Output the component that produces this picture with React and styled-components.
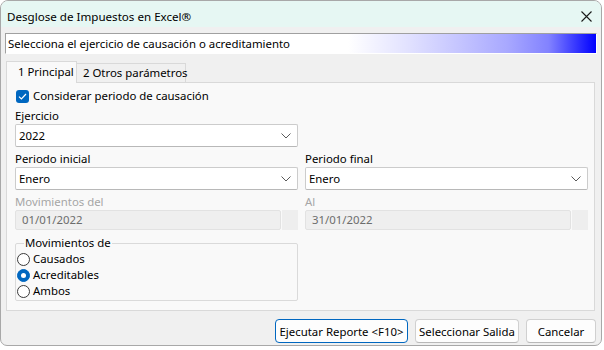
import React from 'react';
import styled, { createGlobalStyle } from 'styled-components';

const Global = createGlobalStyle`
  html, body { margin: 0; padding: 0; background: #ffffff; }
  body {
    font-family: "Segoe UI", "Noto Sans", "Open Sans", sans-serif;
    font-size: 11.4px;
    color: #000;
  }
  * { box-sizing: border-box; }
`;

const Window = styled.div`
  width: 602px;
  height: 346px;
  border: 1px solid #a8a8a8;
  border-radius: 8px 8px 7px 7px;
  background: #f0f0f0;
  overflow: hidden;
  display: flex;
  flex-direction: column;
`;

const TitleBar = styled.div`
  height: 26px;
  flex: none;
  background: #e6f7f3;
  display: flex;
  align-items: center;
  justify-content: space-between;
  padding: 4px 9px 0 6px;
`;

const Title = styled.span`
  font-size: 11.6px;
  line-height: 16px;
  padding-top: 2px;
`;

const Body = styled.div`
  flex: 1;
  display: flex;
  flex-direction: column;
  padding: 6px 4px 0 4px;
`;

const Banner = styled.div`
  height: 21px;
  border-top: 1px solid #a0a0a0;
  border-left: 1px solid #a0a0a0;
  border-bottom: 1px solid #ffffff;
  border-right: 1px solid #ffffff;
  padding-left: 2px;
  line-height: 19px;
  background: linear-gradient(
    to right,
    #ffffff 0%,
    #ffffff 58%,
    #e2e2ff 68%,
    #c4c4ff 77%,
    #a8a8ff 85%,
    #8282ff 92%,
    #3030ff 97%,
    #0000ff 100%
  );
`;

const TabRow = styled.div`
  margin-top: 7px;
  margin-left: 1px;
  height: 21px;
  display: flex;
  align-items: flex-end;
`;

const Tab = styled.div`
  position: relative;
  z-index: ${p => (p.$active ? 2 : 1)};
  width: ${p => p.$w}px;
  height: ${p => (p.$active ? '22px' : '19px')};
  margin-bottom: ${p => (p.$active ? '-1px' : '0')};
  padding: ${p => (p.$active ? '2px 0 0 11px' : '1px 0 0 6px')};
  background: ${p => (p.$active ? '#f9f9f9' : '#f0f0f0')};
  border: 1px solid #d9d9d9;
  border-bottom: none;
  border-left: ${p => (p.$active ? '1px solid #d9d9d9' : 'none')};
  line-height: 16px;
  white-space: nowrap;
`;

const Panel = styled.div`
  margin-left: 1px;
  width: 589px;
  height: 229px;
  border: 1px solid #d9d9d9;
  background: #f9f9f9;
  padding: 5px 6px 0 8px;
  display: flex;
  flex-direction: column;
`;

const CheckRow = styled.label`
  height: 16px;
  display: flex;
  align-items: center;
  gap: 4px;
  line-height: 16px;
`;

const CheckBox = styled.span`
  width: 13px;
  height: 13px;
  border-radius: 3px;
  background: #0067c0;
  display: flex;
  align-items: center;
  justify-content: center;
  margin-left: 1px;
`;

const Grid = styled.div`
  display: grid;
  grid-template-columns: 283px 283px;
  column-gap: 7px;
  margin-top: 4px;
`;

const Field = styled.div`
  display: flex;
  flex-direction: column;
`;

const Label = styled.div`
  height: 16px;
  line-height: 16px;
  color: ${p => (p.$disabled ? '#a6a6a6' : '#000')};
`;

const Select = styled.div`
  height: 23px;
  background: #ffffff;
  border: 1px solid #cccccc;
  border-bottom-color: #b8b8b8;
  border-radius: 2px;
  display: flex;
  align-items: center;
  justify-content: space-between;
  padding: 0 6px 0 3px;
  line-height: 16px;
`;

const DisabledRow = styled.div`
  display: flex;
  gap: 1px;
  height: 20px;
`;

const DisabledInput = styled.div`
  flex: 1;
  height: 20px;
  background: #efefef;
  border: 1px solid #e2e2e2;
  border-radius: 2px;
  color: #6d6d6d;
  line-height: 18px;
  padding-left: 6px;
`;

const SpinBox = styled.div`
  width: 16px;
  height: 20px;
  background: #eeeeee;
`;

const Group = styled.fieldset`
  margin: 5px 0 0 0;
  width: 283px;
  border: 1px solid #dadada;
  border-radius: 2px;
  padding: 0 0 1px 1px;
`;

const Legend = styled.legend`
  margin-left: 7px;
  padding: 0 1px;
  line-height: 16px;
`;

const RadioRow = styled.label`
  height: 16px;
  display: flex;
  align-items: center;
  gap: 3px;
  line-height: 16px;
`;

const RadioCircle = styled.span`
  width: 13px;
  height: 13px;
  border-radius: 50%;
  border: 1px solid ${p => (p.$checked ? '#0067c0' : '#3a3a3a')};
  background: ${p => (p.$checked ? '#0067c0' : '#ffffff')};
  display: flex;
  align-items: center;
  justify-content: center;
  &::after {
    content: '';
    display: ${p => (p.$checked ? 'block' : 'none')};
    width: 5px;
    height: 5px;
    border-radius: 50%;
    background: #ffffff;
  }
`;

const Footer = styled.div`
  margin-top: 8px;
  display: flex;
  justify-content: flex-end;
  gap: 7px;
  padding-right: 1px;
`;

const Button = styled.button`
  width: ${p => p.$w}px;
  height: 24px;
  font-family: inherit;
  font-size: 11.4px;
  color: #000;
  background: #fdfdfd;
  border: 1px solid ${p => (p.$default ? '#0067c0' : '#d0d0d0')};
  border-bottom-color: ${p => (p.$default ? '#0067c0' : '#b8b8b8')};
  border-radius: 4px;
  padding: 0;
  white-space: nowrap;
`;

const Chevron = () => (
  <svg width="10" height="6" viewBox="0 0 10 6">
    <path d="M0.5 0.5 L5 5 L9.5 0.5" fill="none" stroke="#5a5a5a" strokeWidth="1" />
  </svg>
);

const CloseIcon = () => (
  <svg width="11" height="11" viewBox="0 0 11 11">
    <path d="M0.5 0.5 L10.5 10.5 M10.5 0.5 L0.5 10.5" stroke="#1a1a1a" strokeWidth="1.1" />
  </svg>
);

const CheckMark = () => (
  <svg width="9" height="7" viewBox="0 0 9 7">
    <path d="M1 3.6 L3.4 6 L8 1" fill="none" stroke="#ffffff" strokeWidth="1.2" />
  </svg>
);

export default function App() {
  return (
    <>
      <Global />
      <Window>
        <TitleBar>
          <Title>Desglose de Impuestos en Excel®</Title>
          <CloseIcon />
        </TitleBar>
        <Body>
          <Banner>Selecciona el ejercicio de causación o acreditamiento</Banner>
          <TabRow>
            <Tab $active $w={71}>1 Principal</Tab>
            <Tab $w={109}>2 Otros parámetros</Tab>
          </TabRow>
          <Panel>
            <CheckRow>
              <CheckBox><CheckMark /></CheckBox>
              Considerar periodo de causación
            </CheckRow>
            <Grid>
              <Field>
                <Label>Ejercicio</Label>
                <Select>2022<Chevron /></Select>
              </Field>
            </Grid>
            <Grid>
              <Field>
                <Label>Periodo inicial</Label>
                <Select>Enero<Chevron /></Select>
              </Field>
              <Field>
                <Label>Periodo final</Label>
                <Select>Enero<Chevron /></Select>
              </Field>
            </Grid>
            <Grid>
              <Field>
                <Label $disabled>Movimientos del</Label>
                <DisabledRow>
                  <DisabledInput>01/01/2022</DisabledInput>
                  <SpinBox />
                </DisabledRow>
              </Field>
              <Field>
                <Label $disabled>Al</Label>
                <DisabledRow>
                  <DisabledInput>31/01/2022</DisabledInput>
                  <SpinBox />
                </DisabledRow>
              </Field>
            </Grid>
            <Group>
              <Legend>Movimientos de</Legend>
              <RadioRow><RadioCircle />Causados</RadioRow>
              <RadioRow><RadioCircle $checked />Acreditables</RadioRow>
              <RadioRow><RadioCircle />Ambos</RadioRow>
            </Group>
          </Panel>
          <Footer>
            <Button $w={133} $default>Ejecutar Reporte &lt;F10&gt;</Button>
            <Button $w={104}>Seleccionar Salida</Button>
            <Button $w={70}>Cancelar</Button>
          </Footer>
        </Body>
      </Window>
    </>
  );
}
